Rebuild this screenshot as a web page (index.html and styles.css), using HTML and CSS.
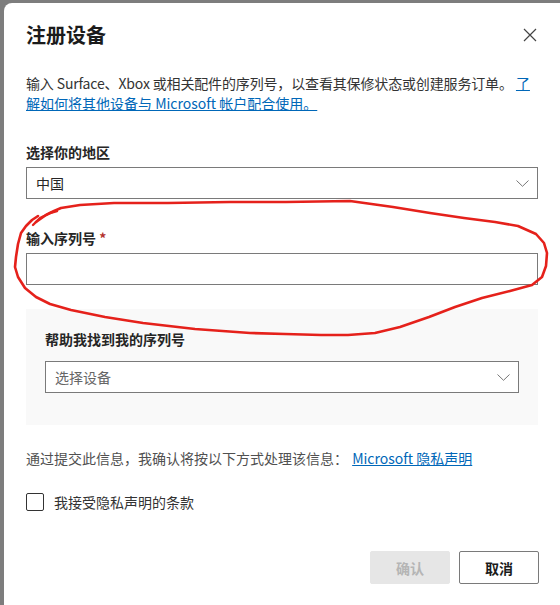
FILE: index.html
```html
<!DOCTYPE html>
<html lang="zh-CN">
<head>
<meta charset="utf-8">
<title>注册设备</title>
<link rel="stylesheet" href="styles.css">
</head>
<body>
<div class="dialog">
  <div class="header">
    <h1 class="title">注册设备</h1>
    <button class="close" aria-label="关闭">
      <svg width="14" height="14" viewBox="0 0 14 14"><path d="M1 1L13 13M13 1L1 13" stroke="#444" stroke-width="1.2" fill="none"/></svg>
    </button>
  </div>
  <p class="desc"><span class="desc-lead">输入 Surface、Xbox 或相关配件的序列号，以查看其保修状态或创建服务订单。</span> <a href="#">了解如何将其他设备与 Microsoft 帐户配合使用。</a></p>

  <div class="field region">
    <label class="label">选择你的地区</label>
    <div class="select">
      <span class="select-value">中国</span>
      <svg class="chev" width="13" height="7" viewBox="0 0 13 7"><path d="M0.5 0.5L6.5 6.3L12.5 0.5" stroke="#777" stroke-width="1" fill="none"/></svg>
    </div>
  </div>

  <div class="field serial">
    <label class="label">输入序列号 <span class="req">*</span></label>
    <div class="input"></div>
  </div>

  <div class="panel">
    <label class="label panel-label">帮助我找到我的序列号</label>
    <div class="select">
      <span class="select-value placeholder">选择设备</span>
      <svg class="chev" width="13" height="7" viewBox="0 0 13 7"><path d="M0.5 0.5L6.5 6.3L12.5 0.5" stroke="#777" stroke-width="1" fill="none"/></svg>
    </div>
  </div>

  <p class="privacy">通过提交此信息，我确认将按以下方式处理该信息： <a href="#">Microsoft 隐私声明</a></p>

  <div class="check-row">
    <span class="checkbox"></span>
    <span class="check-label">我接受隐私声明的条款</span>
  </div>

  <div class="actions">
    <button class="btn btn-disabled">确认</button>
    <button class="btn btn-cancel">取消</button>
  </div>

  <svg class="scribble" width="560" height="605" viewBox="0 0 560 605">
    <polyline points="36,222 46,215 54,211 61,208 80,205 114,203 168,203 230,202 286,202 350,201 393,207 430,213 464,218 495,222 518,226 536,234 544,243 547,253 546,266 542,277 532,285 510,291 482,298 455,307 429,317 400,327 375,333 348,335 321,335 285,334 250,333 195,329 143,323 105,317 71,310 50,304 36,297 25,288 18,277 15,267 16,257 18,244 21,233 26,226 32,220 38,216" stroke="#e5211b" stroke-width="2.6" fill="none" stroke-linecap="round" stroke-linejoin="round"/>
    <polyline points="33,225 40,218 50,213 57,211" stroke="#e5211b" stroke-width="2.4" fill="none" stroke-linecap="round" stroke-linejoin="round"/>
  </svg>
</div>
</body>
</html>
```

FILE: styles.css
```css
html, body {
  margin: 0;
  padding: 0;
  height: 100%;
  overflow: hidden;
}
body {
  background: #7d7d7d;
  padding: 3px 0 0 4px;
  box-sizing: border-box;
  font-family: "Segoe UI", "Noto Sans CJK SC", "Noto Sans", sans-serif;
  color: #262626;
}
.dialog {
  position: relative;
  background: #fff;
  border-top-left-radius: 8px;
  height: 640px;
  width: 600px;
  box-sizing: border-box;
  padding: 18px 0 0 22px;
}
.dialog > * {
  width: 512px;
}
.header {
  display: flex;
  align-items: center;
  justify-content: space-between;
  height: 28px;
}
.title {
  margin: 0;
  font-size: 20px;
  font-weight: 700;
  line-height: 28px;
  color: #1b1b1b;
}
.close {
  border: 0;
  background: none;
  padding: 0;
  width: 14px;
  height: 14px;
  margin-right: 1px;
  display: flex;
}
.desc {
  margin: 25px 0 0 0;
  font-size: 14px;
  line-height: 19.5px;
  color: #333;
}
.desc-lead {
  letter-spacing: -0.15px;
}
a {
  color: #0067b8;
  text-decoration: underline;
}
.field {
  display: flex;
  flex-direction: column;
}
.region {
  margin-top: 29px;
}
.serial {
  margin-top: 29px;
}
.label {
  font-size: 14px;
  font-weight: 700;
  line-height: 20px;
  color: #262626;
  display: block;
  margin-bottom: 5px;
}
.panel-label {
  margin-bottom: 12px;
}
.req {
  color: #b3312c;
  font-weight: 700;
}
.select, .input {
  height: 32px;
  box-sizing: border-box;
  border: 1px solid #7a7a7a;
  background: #fff;
  display: flex;
  align-items: center;
  justify-content: space-between;
  padding: 0 8px 0 9px;
}
.select-value {
  font-size: 14px;
  color: #262626;
}
.placeholder {
  color: #666;
}
.chev {
  display: block;
}
.panel {
  margin-top: 24px;
  background: #f9f9f9;
  box-sizing: border-box;
  padding: 20px 19px 32px 19px;
}
.privacy {
  margin: 23px 0 0 0;
  font-size: 14px;
  line-height: 20px;
  color: #505050;
}
.privacy a {
  margin-left: 1px;
}
.check-row {
  display: flex;
  align-items: center;
  gap: 10px;
  margin-top: 24px;
}
.checkbox {
  width: 18px;
  height: 18px;
  box-sizing: border-box;
  border: 1px solid #333;
  border-radius: 2px;
  background: #fff;
}
.check-label {
  font-size: 14px;
  color: #333;
  line-height: 20px;
}
.actions {
  display: flex;
  justify-content: flex-end;
  gap: 9px;
  margin-top: 39px;
}
.btn {
  width: 80px;
  height: 33px;
  font-family: inherit;
  font-size: 14px;
  font-weight: 700;
  box-sizing: border-box;
  border-radius: 2px;
}
.btn-disabled {
  background: #e6e6e6;
  border: 1px solid #e6e6e6;
  color: #b5b5b5;
}
.btn-cancel {
  background: #fff;
  border: 1px solid #7a7a7a;
  color: #1b1b1b;
  margin-right: -1px;
}
.scribble {
  position: absolute;
  left: -4px;
  top: -3px;
  width: 560px;
  height: 605px;
  pointer-events: none;
}
```
